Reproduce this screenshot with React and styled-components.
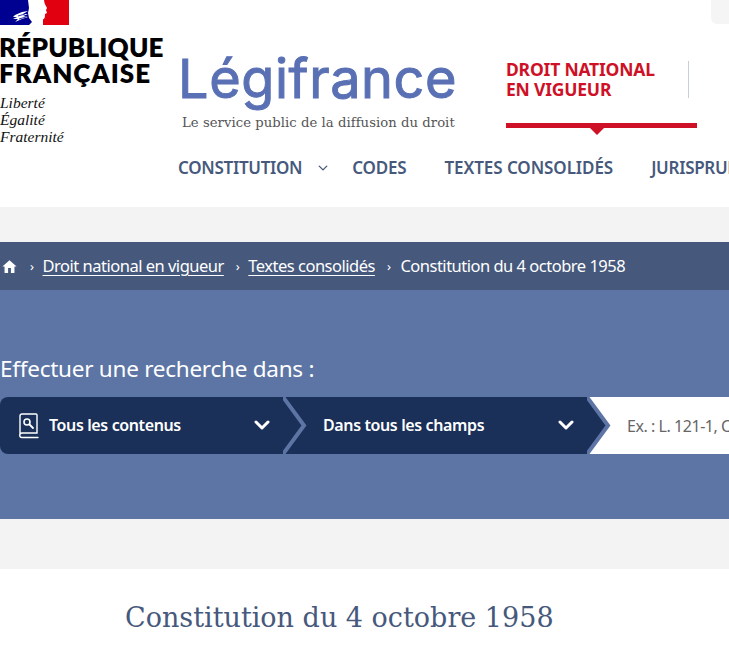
import React from 'react';
import styled, { createGlobalStyle } from 'styled-components';

const Global = createGlobalStyle`
  html, body { margin: 0; padding: 0; background: #fff; overflow: hidden; width: 729px; height: 647px; }
  * { box-sizing: border-box; }
`;
const sans = `"Noto Sans", "Open Sans", sans-serif`;
const slab = `"DejaVu Serif", "Liberation Serif", serif`;

const Page = styled.div`width: 729px; height: 647px; overflow: hidden; position: relative;`;
const Header = styled.header`display: flex; height: 207px; background: #fff;`;
const GovLogo = styled.div`width: 178px; flex: none; display: flex; flex-direction: column;`;
const GovName = styled.div`
  font: 800 26px/26px Lato, sans-serif; color: #000; margin-top: 9px; margin-left: -1px; white-space: nowrap;
`;
const GovLine = styled.div`letter-spacing: ${p => p.$ls}px;`;
const Motto = styled.div`
  font: italic 400 15.500px/17px "Liberation Serif", serif; color: #111; margin-top: 8px;
`;
const HeaderMain = styled.div`flex: 1; min-width: 0; display: flex; flex-direction: column;`;
const TopRow = styled.div`display: flex; height: 149px;`;
const Brand = styled.div`width: 328px; flex: none; padding: 46px 0 0 0;`;
const BrandName = styled.div`
  font: 400 54px/66px Inter, sans-serif; color: #5a70b4; letter-spacing: 0.6px; white-space: nowrap;
  -webkit-text-stroke: 1px #5a70b4;
`;
const Tagline = styled.div`font: 400 13.2px/18px ${slab}; color: #555; margin: 2px 0 0 4px; white-space: nowrap; letter-spacing: 0.05px;`;
const TabArea = styled.div`position: relative; width: 191px; height: 136px; flex: none; padding-top: 59px;`;
const TabLabel = styled.div`
  font: 700 17.500px/20px ${sans}; color: #ce1126; letter-spacing: -0.2px; height: 69px; border-bottom: 5px solid #ce1126;
`;
const TabDivider = styled.span`position: absolute; right: 8px; top: 61px; width: 1px; height: 37px; background: #c8ced9;`;
const TabCaret = styled.span`
  position: absolute; left: 84px; top: 128px; width: 0; height: 0;
  border-left: 7px solid transparent; border-right: 7px solid transparent; border-top: 7px solid #ce1126;
`;
const Corner = styled.span`position: absolute; left: 711px; top: 0; width: 18px; height: 24px; background: #f5f5f5; border-bottom-left-radius: 6px;`;
const Nav = styled.nav`display: flex; align-items: center; white-space: nowrap; height: 36px; margin-top: 1px;`;
const NavItem = styled.span`font: 600 17px/22px ${sans}; color: #46597c; letter-spacing: ${p => p.$ls ?? -0.3}px; margin-right: ${p => p.$gap}px;`;
const NavChevron = styled.span`display: inline-flex; margin-right: 24px; color: #46597c;`;

const GrayBand = styled.div`height: ${p => p.$h}px; background: #f3f3f3;`;
const Breadcrumb = styled.div`
  height: 48px; background: #46597c; color: #fff; display: flex; align-items: center; white-space: nowrap;
  font: 400 16.500px/22px ${sans}; letter-spacing: -0.5px; padding-left: 1px;
`;
const Crumb = styled.a`color: #fff; text-decoration: underline; text-underline-offset: 3px; text-decoration-thickness: 1px;`;
const Sep = styled.span`font-size: 13px; margin: 0 ${p => p.$r}px 0 ${p => p.$l}px;`;
const Hero = styled.section`height: 229px; background: #5c75a4; padding-top: 64px;`;
const HeroTitle = styled.div`font: 400 22.500px/30px ${sans}; color: #fff; letter-spacing: -0.25px; white-space: nowrap;`;
const SearchBar = styled.div`display: flex; height: 57px; margin-top: 13px; width: 729px;`;
const Selector = styled.div`
  width: ${p => p.$w}px; flex: none; height: 57px; background: #1a3059; color: #fff; display: flex; align-items: center;
  padding: 0 ${p => p.$pr}px 2px ${p => p.$pl}px; font: 600 16px/22px ${sans}; letter-spacing: -0.38px;
  border-radius: ${p => p.$first ? '8px 0 0 8px' : '0'}; white-space: nowrap;
`;
const SelectorLabel = styled.span`flex: 1; margin-left: ${p => p.$ml}px;`;
const BookIcon = styled.svg`flex: none; margin-top: 3px;`;
const Arrow = styled.svg`display: block; flex: none;`;
const SearchInput = styled.div`
  flex: 1; height: 57px; background: #fff; color: #666; display: flex; align-items: center; overflow: hidden; white-space: nowrap;
  font: 400 16px/22px ${sans}; letter-spacing: -0.45px; padding-left: 16px;
`;
const Article = styled.main`background: #fff; padding: 29px 0 0 125px;`;
const ArticleTitle = styled.h1`margin: 0; font: 400 27px/40px ${slab}; color: #46597c; white-space: nowrap; letter-spacing: 0;`;

const Chev = ({ size = 16, sw = 3 }) => (
  <svg width={size} height={size} viewBox="0 0 16 16" fill="none">
    <path d="M2 5l6 6 6-6" stroke="currentColor" strokeWidth={sw} strokeLinecap="round" strokeLinejoin="round" />
  </svg>
);
const ArrowSep = ({ right }) => (
  <Arrow width="24" height="57" viewBox="0 0 24 57">
    <rect width="24" height="57" fill={right} />
    <path d="M0 0H1L22 28.500 1 57H0Z" fill="#1a3059" />
    <path d="M0 0L21 28.500 0 57" fill="none" stroke="#5c75a4" strokeWidth="4" />
  </Arrow>
);

export default function App() {
  return (
    <Page>
      <Global />
      <Header>
        <GovLogo>
          <svg width="69" height="25" viewBox="0 0 69 25">
            <rect width="32" height="25" fill="#000091" />
            <rect x="43" width="26" height="25" fill="#e1000f" />
            <path d="M28 0H44c0 3 2 6 3 8l-1 2 1 3-2 1c0 3 0 5-3 6l-3 2-1 3H29l3-3-3-4-1-5 1-5z" fill="#fff" />
            <path d="M15 15l7-3 6-1-5 3 5 0-5 2 5 1-6 2-7 3 3-3-5 0 4-2-4 0z" fill="#fff" />
            <path d="M18 16l7-2M19 19l7-2" stroke="#000091" strokeWidth="0.8" />
          </svg>
          <GovName>
            <GovLine $ls={0.2}>RÉPUBLIQUE</GovLine>
            <GovLine $ls={0.95}>FRANÇAISE</GovLine>
          </GovName>
          <Motto>Liberté<br />Égalité<br />Fraternité</Motto>
        </GovLogo>
        <HeaderMain>
          <TopRow>
            <Brand>
              <BrandName>Légifrance</BrandName>
              <Tagline>Le service public de la diffusion du droit</Tagline>
            </Brand>
            <TabArea>
              <TabLabel>DROIT NATIONAL<br />EN VIGUEUR</TabLabel>
              <TabDivider />
              <TabCaret />
            </TabArea>
          </TopRow>
          <Nav>
            <NavItem $gap={16}>CONSTITUTION</NavItem>
            <NavChevron><Chev size={10} sw={2.2} /></NavChevron>
            <NavItem $gap={38} $ls={-0.2}>CODES</NavItem>
            <NavItem $gap={38} $ls={-0.07}>TEXTES CONSOLIDÉS</NavItem>
            <NavItem $gap={38}>JURISPRUDENCE</NavItem>
          </Nav>
        </HeaderMain>
      </Header>
      <Corner />
      <GrayBand $h={35} />
      <Breadcrumb>
        <svg width="17" height="17" viewBox="0 0 24 24" fill="#fff"><path d="M10 21v-7h4v7h5v-9h3L12 3 2 12h3v9z" /></svg>
        <Sep $l={12} $r={9}>›</Sep>
        <Crumb>Droit national en vigueur</Crumb>
        <Sep $l={12} $r={9}>›</Sep>
        <Crumb>Textes consolidés</Crumb>
        <Sep $l={12} $r={10}>›</Sep>
        <span>Constitution du 4 octobre 1958</span>
      </Breadcrumb>
      <Hero>
        <HeroTitle>Effectuer une recherche dans :</HeroTitle>
        <SearchBar>
          <Selector $w={283} $first $pl={18} $pr={13}>
            <BookIcon width="22" height="26" viewBox="0 0 22 26" fill="none" stroke="#fff" strokeWidth="1.4" strokeLinecap="round">
              <path d="M2 21V3a2 2 0 0 1 2-2h14a1 1 0 0 1 1 1v18H4a2 2 0 0 0 0 4.500h16" />
              <circle cx="9" cy="9" r="3" strokeWidth="1.6" />
              <path d="M11.500 11.500L15 15" strokeWidth="1.8" />
            </BookIcon>
            <SelectorLabel $ml={9}>Tous les contenus</SelectorLabel>
            <Chev />
          </Selector>
          <ArrowSep right="#1a3059" />
          <Selector $w={280} $pl={16} $pr={13}>
            <SelectorLabel $ml={0}>Dans tous les champs</SelectorLabel>
            <Chev />
          </Selector>
          <ArrowSep right="#fff" />
          <SearchInput>Ex. : L. 121-1, C</SearchInput>
        </SearchBar>
      </Hero>
      <GrayBand $h={50} />
      <Article>
        <ArticleTitle>Constitution du 4 octobre 1958</ArticleTitle>
      </Article>
    </Page>
  );
}
